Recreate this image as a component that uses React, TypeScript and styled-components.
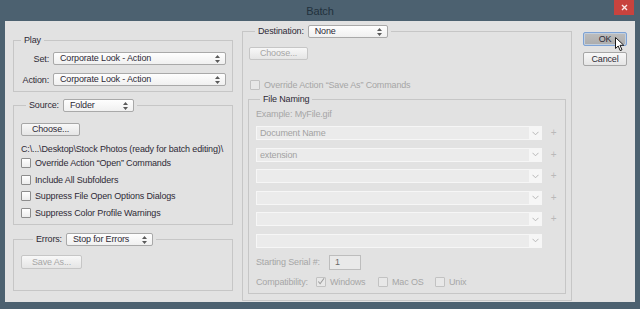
import React from "react";
import styled, { createGlobalStyle } from "styled-components";

const GlobalStyle = createGlobalStyle`
  html, body {
    margin: 0;
    padding: 0;
    background: #4c6170;
  }
  body {
    font-family: "Liberation Sans", Arial, sans-serif;
    font-size: 9px;
    letter-spacing: -0.15px;
    color: #2e2a36;
  }
  * {
    box-sizing: border-box;
  }
`;

const Window = styled.div`
  position: relative;
  width: 640px;
  height: 309px;
  background: #4c6170;
  overflow: hidden;
`;

const TitleBar = styled.div`
  position: relative;
  height: 21px;
  display: flex;
  align-items: center;
  justify-content: center;
  font-size: 11px;
  color: #22313d;
`;

const CloseButton = styled.div`
  position: absolute;
  top: 0;
  right: 6px;
  width: 20px;
  height: 15px;
  background: #c8433e;
  display: flex;
  align-items: center;
  justify-content: center;
`;

const Panel = styled.div`
  margin: 0 5px;
  height: 281px;
  background: #e2e2e2;
  display: flex;
  align-items: flex-start;
  padding: 0 8px;
`;

const LeftColumn = styled.div`
  width: 220px;
  display: flex;
  flex-direction: column;
`;

const RightColumn = styled.div`
  width: 330px;
  margin-left: 9px;
  display: flex;
  flex-direction: column;
`;

const ButtonColumn = styled.div`
  width: 44px;
  margin: 11px 0 0 11px;
  display: flex;
  flex-direction: column;
  gap: 6px;
`;

interface GroupProps {
  $mt: number;
  $pt: number;
  $pb: number;
  $pl?: number;
  $pr?: number;
}

const Group = styled.fieldset<GroupProps>`
  margin: ${ p => p.$mt }px 0 0 0;
  padding: ${ p => p.$pt }px ${ p => p.$pr ?? 6 }px ${ p => p.$pb }px ${ p => p.$pl ?? 7 }px;
  border: 1px solid #c6c6c6;
  min-width: 0;
  display: flex;
  flex-direction: column;
  align-items: flex-start;
`;

const Legend = styled.legend<{ $indent: number }>`
  margin-left: ${ p => p.$indent }px;
  padding: 0 3px;
  display: flex;
  align-items: center;
  gap: 4px;
  line-height: 11px;
  white-space: nowrap;
`;

const Select = styled.div<{ $width?: number }>`
  width: ${ p => (p.$width ? `${ p.$width }px` : "100%") };
  height: 13px;
  display: flex;
  align-items: center;
  justify-content: space-between;
  padding: 0 5px 0 6px;
  border: 1px solid #a9a9a9;
  border-radius: 2px;
  background: linear-gradient(#fefefe, #f0f0f0);
  line-height: 11px;
  white-space: nowrap;
`;

const PlayGrid = styled.div`
  width: 100%;
  display: grid;
  grid-template-columns: 28px 1fr;
  column-gap: 4px;
  row-gap: 8px;
  align-items: center;
`;

const RowLabel = styled.span`
  text-align: right;
  white-space: nowrap;
`;

const PushButton = styled.button<{ $width: number; $height?: number; $off?: boolean; $ml?: number }>`
  width: ${ p => p.$width }px;
  height: ${ p => p.$height ?? 13 }px;
  margin-left: ${ p => p.$ml ?? 0 }px;
  padding: 0;
  font: inherit;
  letter-spacing: inherit;
  line-height: 11px;
  border: 1px solid ${ p => (p.$off ? "#c6c6c6" : "#a6a6a6") };
  border-radius: 2px;
  background: linear-gradient(#f8f8f8, #e5e5e5);
  color: ${ p => (p.$off ? "#a6a6a6" : "#2e2a36") };
`;

const DefaultButton = styled(PushButton)`
  border-color: #7ea3d6;
  background: linear-gradient(#bdbdbd, #acacac);
  box-shadow: inset 0 0 0 1px #c3cfdd;
`;

const PathText = styled.div`
  margin-top: 7px;
  line-height: 12px;
  white-space: nowrap;
`;

const CheckRow = styled.label<{ $off?: boolean; $height?: number; $ml?: number; $width?: number }>`
  display: flex;
  align-items: center;
  gap: 4px;
  height: ${ p => p.$height ?? 16.5 }px;
  width: ${ p => (p.$width ? `${ p.$width }px` : "auto") };
  margin-left: ${ p => p.$ml ?? 0 }px;
  color: ${ p => (p.$off ? "#a6a6a6" : "#2e2a36") };
  white-space: nowrap;
`;

const Box = styled.span<{ $off?: boolean }>`
  width: 10px;
  height: 10px;
  flex: none;
  border: 1px solid ${ p => (p.$off ? "#c2c2c2" : "#8d8d8d") };
  border-radius: 1px;
  background: ${ p => (p.$off ? "#e8e8e8" : "linear-gradient(#ffffff, #ececec)") };
  display: flex;
  align-items: center;
  justify-content: center;
`;

const OverrideRow = styled(CheckRow)`
  margin-top: 19px;
`;

const Example = styled.div`
  margin-top: 2px;
  line-height: 12px;
  color: #a6a6a6;
`;

const NamingList = styled.div`
  width: 100%;
  margin-top: 6px;
  display: flex;
  flex-direction: column;
  gap: 7.6px;
`;

const NamingRow = styled.div`
  display: grid;
  grid-template-columns: 286px 23px;
  align-items: center;
`;

const NamingSelect = styled.div`
  height: 14px;
  display: flex;
  align-items: stretch;
  border: 1px solid #f6f6f6;
  background: #f6f6f6;
`;

const NamingValue = styled.span`
  flex: 1;
  background: #ebebeb;
  padding-left: 3px;
  line-height: 12px;
  color: #a2a2a2;
`;

const NamingArrow = styled.span`
  width: 12px;
  display: flex;
  align-items: center;
  justify-content: center;
`;

const Plus = styled.span`
  text-align: center;
  color: #b9b9b9;
  font-size: 10px;
  line-height: 10px;
`;

const SerialRow = styled.div`
  margin-top: 7px;
  display: flex;
  align-items: center;
  color: #a6a6a6;
`;

const FieldLabel = styled.span<{ $width: number }>`
  width: ${ p => p.$width }px;
  white-space: nowrap;
`;

const SerialInput = styled.div`
  width: 32px;
  height: 15px;
  border: 1px solid #bdbdbd;
  background: #e9e9e9;
  padding-left: 5px;
  line-height: 13px;
  color: #6a6a6a;
`;

const CompatRow = styled.div`
  margin-top: 6px;
  height: 12px;
  display: flex;
  align-items: center;
  color: #a6a6a6;
`;

const Cursor = styled.svg`
  position: absolute;
  left: 615px;
  top: 37px;
`;

const UpDown = () => (
  <svg width="5" height="8" viewBox="0 0 5 8">
    <path d="M2.5 0 L5 3 H0 Z M0 5 H5 L2.5 8 Z" fill="#5a5a5a" />
  </svg>
);

const Chevron = () => (
  <svg width="7" height="5" viewBox="0 0 7 5">
    <polyline points="0.5,0.8 3.5,3.8 6.5,0.8" fill="none" stroke="#b8b8b8" strokeWidth="1" />
  </svg>
);

const Tick = () => (
  <svg width="9" height="9" viewBox="0 0 9 9">
    <polyline points="1.5,4.5 3.5,7 8,0.8" fill="none" stroke="#9c9c9c" strokeWidth="1.2" />
  </svg>
);

const leftChecks = [
  "Override Action \u201cOpen\u201d Commands",
  "Include All Subfolders",
  "Suppress File Open Options Dialogs",
  "Suppress Color Profile Warnings",
];

const naming = [ "Document Name", "extension", "", "", "", "" ];

const App = () => (
  <>
    <GlobalStyle />
    <Window>
      <TitleBar>
        Batch
        <CloseButton>
          <svg width="7" height="7" viewBox="0 0 7 7">
            <path d="M1 1 L6 6 M6 1 L1 6" stroke="#fbe9e8" strokeWidth="1.4" />
          </svg>
        </CloseButton>
      </TitleBar>
      <Panel>
        <LeftColumn>
          <Group $mt={ 14 } $pt={ 6 } $pb={ 5 }>
            <Legend $indent={ 0 }>Play</Legend>
            <PlayGrid>
              <RowLabel>Set:</RowLabel>
              <Select>
                Corporate Look - Action
                <UpDown />
              </Select>
              <RowLabel>Action:</RowLabel>
              <Select>
                Corporate Look - Action
                <UpDown />
              </Select>
            </PlayGrid>
          </Group>

          <Group $mt={ 7 } $pt={ 11 } $pb={ 3 }>
            <Legend $indent={ 5 }>
              Source:
              <Select $width={ 71 }>
                Folder
                <UpDown />
              </Select>
            </Legend>
            <PushButton $width={ 59 }>Choose...</PushButton>
            <PathText>C:\...\Desktop\Stock Photos (ready for batch editing)\</PathText>
            { leftChecks.map(text => (
              <CheckRow key={ text }>
                <Box />
                { text }
              </CheckRow>
            )) }
          </Group>

          <Group $mt={ 8 } $pt={ 9 } $pb={ 21 }>
            <Legend $indent={ 12 }>
              Errors:
              <Select $width={ 87 }>
                Stop for Errors
                <UpDown />
              </Select>
            </Legend>
            <PushButton $width={ 61 } $height={ 14 } $off>Save As...</PushButton>
          </Group>
        </LeftColumn>

        <RightColumn>
          <Group $mt={ 4 } $pt={ 9 } $pb={ 6 } $pl={ 5 } $pr={ 5 }>
            <Legend $indent={ 7 }>
              Destination:
              <Select $width={ 80 }>
                None
                <UpDown />
              </Select>
            </Legend>
            <PushButton $width={ 59 } $ml={ 1 } $off>Choose...</PushButton>
            <OverrideRow $off $height={ 12 } $ml={ 2 }>
              <Box $off />
              Override Action &ldquo;Save As&rdquo; Commands
            </OverrideRow>

            <Group $mt={ 3 } $pt={ 1 } $pb={ 5 } $pl={ 7 } $pr={ 0 } style={ { width: "100%" } }>
              <Legend $indent={ 4 }>File Naming</Legend>
              <Example>Example: MyFile.gif</Example>
              <NamingList>
                { naming.map((value, index) => (
                  <NamingRow key={ index }>
                    <NamingSelect>
                      <NamingValue>{ value }</NamingValue>
                      <NamingArrow>
                        <Chevron />
                      </NamingArrow>
                    </NamingSelect>
                    { index < naming.length - 1 && <Plus>+</Plus> }
                  </NamingRow>
                )) }
              </NamingList>
              <SerialRow>
                <FieldLabel $width={ 73 }>Starting Serial #:</FieldLabel>
                <SerialInput>1</SerialInput>
              </SerialRow>
              <CompatRow>
                <FieldLabel $width={ 60 }>Compatibility:</FieldLabel>
                <CheckRow $off $height={ 12 } $width={ 62 }>
                  <Box $off>
                    <Tick />
                  </Box>
                  Windows
                </CheckRow>
                <CheckRow $off $height={ 12 } $width={ 57 }>
                  <Box $off />
                  Mac OS
                </CheckRow>
                <CheckRow $off $height={ 12 }>
                  <Box $off />
                  Unix
                </CheckRow>
              </CompatRow>
            </Group>
          </Group>
        </RightColumn>

        <ButtonColumn>
          <DefaultButton $width={ 44 } $height={ 14 }>OK</DefaultButton>
          <PushButton $width={ 44 } $height={ 14 }>Cancel</PushButton>
        </ButtonColumn>
      </Panel>
      <Cursor width="10" height="15" viewBox="0 0 10 15">
        <path d="M0.5 0.5 L0.5 11.5 L3.2 9 L5.2 13.6 L7 12.8 L5 8.3 L8.8 8.3 Z" fill="#ffffff" stroke="#1a1a1a" strokeWidth="1" />
      </Cursor>
    </Window>
  </>
);

export default App;
